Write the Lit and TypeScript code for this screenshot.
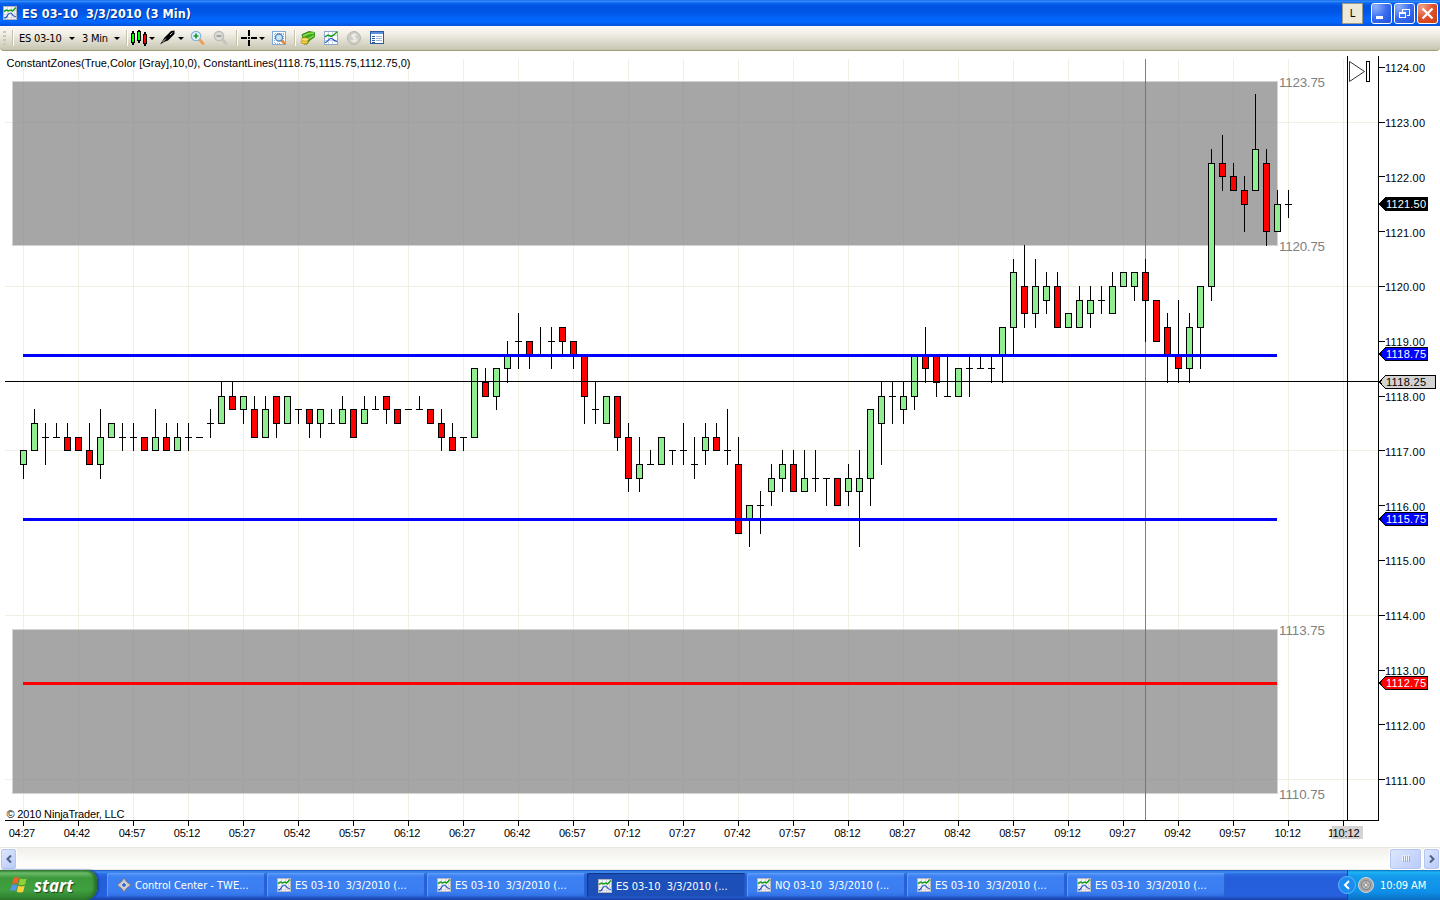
import { LitElement, html, svg, css } from 'lit';
import { customElement, property } from 'lit/decorators.js';

type Candle = [open: number, high: number, low: number, close: number];

interface PriceTag {
  price: number;
  y: number;
  width: number;
  fill: string;
  color: string;
}

/** Bars in quarter points above 1115.00: open, high, low, close. */
const CANDLES: Candle[] = [
  [7, 8, 6, 8], [8, 11, 8, 10], [9, 10, 7, 9], [9, 10, 9, 9], [9, 10, 8, 8], [9, 9, 8, 8],
  [8, 10, 7, 7], [7, 11, 6, 9], [9, 10, 9, 10], [9, 10, 8, 9], [9, 10, 8, 9], [9, 9, 8, 8],
  [8, 11, 8, 9], [9, 10, 8, 8], [8, 10, 8, 9], [9, 10, 8, 9], [9, 9, 9, 9], [10, 11, 9, 10],
  [10, 13, 10, 12], [12, 13, 11, 11], [11, 12, 10, 12], [11, 12, 9, 9], [9, 12, 9, 11], [12, 12, 9, 10],
  [10, 12, 10, 12], [11, 11, 10, 11], [11, 11, 9, 10], [10, 11, 9, 11], [10, 11, 10, 10], [10, 12, 10, 11],
  [11, 11, 9, 9], [10, 12, 10, 11], [11, 12, 11, 11], [12, 12, 10, 11], [11, 11, 10, 10], [11, 11, 11, 11],
  [11, 12, 11, 11], [11, 11, 10, 10], [10, 11, 8, 9], [9, 10, 8, 8], [9, 9, 8, 9], [9, 14, 9, 14],
  [13, 14, 12, 12], [12, 14, 11, 14], [14, 16, 13, 15], [16, 18, 14, 16], [16, 16, 14, 15], [15, 17, 15, 15],
  [16, 17, 14, 16], [17, 17, 15, 16], [16, 16, 14, 15], [15, 15, 10, 12], [11, 13, 10, 11], [10, 12, 10, 12],
  [12, 12, 8, 9], [9, 10, 5, 6], [6, 9, 5, 7], [7, 8, 7, 7], [7, 9, 7, 9], [8, 8, 7, 8],
  [8, 10, 7, 8], [7, 9, 6, 7], [8, 10, 7, 9], [9, 10, 8, 8], [8, 11, 7, 8], [7, 9, 2, 2],
  [3, 4, 1, 4], [4, 5, 2, 4], [5, 7, 4, 6], [6, 8, 5, 7], [7, 8, 5, 5], [5, 8, 5, 6],
  [6, 8, 5, 6], [6, 6, 4, 6], [6, 6, 4, 4], [5, 7, 4, 6], [5, 8, 1, 6], [6, 11, 4, 11],
  [10, 13, 7, 12], [12, 13, 10, 12], [11, 13, 10, 12], [12, 15, 11, 15], [15, 17, 13, 14], [15, 15, 12, 13],
  [12, 15, 12, 12], [12, 14, 12, 14], [14, 15, 12, 14], [14, 15, 14, 14], [14, 15, 13, 14], [15, 17, 13, 17],
  [17, 22, 15, 21], [20, 23, 17, 18], [18, 22, 17, 20], [19, 21, 18, 20], [20, 21, 17, 17], [17, 18, 17, 18],
  [17, 20, 17, 19], [18, 20, 17, 19], [19, 20, 18, 19], [18, 21, 18, 20], [20, 21, 20, 21], [20, 21, 19, 21],
  [21, 22, 16, 19], [19, 19, 16, 16], [17, 18, 13, 15], [15, 19, 13, 14], [14, 18, 13, 17], [17, 20, 14, 20],
  [20, 30, 19, 29], [29, 31, 27, 28], [28, 29, 27, 27], [27, 28, 24, 26], [27, 34, 27, 30], [29, 30, 23, 24],
  [24, 27, 24, 26], [26, 27, 25, 26],
];

const TIMES = [
  '04:27', '04:42', '04:57', '05:12', '05:27', '05:42', '05:57', '06:12', '06:27', '06:42', '06:57', '07:12',
  '07:27', '07:42', '07:57', '08:12', '08:27', '08:42', '08:57', '09:12', '09:27', '09:42', '09:57', '10:12',
];

const PRICES = [1124, 1123, 1122, 1121, 1120, 1119, 1118, 1117, 1116, 1115, 1114, 1113, 1112, 1111];

const TAGS: PriceTag[] = [
  { price: 1121.5, y: 204, width: 49, fill: '#000', color: '#fff' },
  { price: 1118.75, y: 354, width: 49, fill: '#00f', color: '#fff' },
  { price: 1118.25, y: 382, width: 57, fill: '#d3d3d3', color: '#000' },
  { price: 1115.75, y: 519, width: 49, fill: '#00f', color: '#fff' },
  { price: 1112.75, y: 683, width: 49, fill: '#f00', color: '#fff' },
];

const priceY = (price: number) => Math.floor(122.01 + (1123 - price) * 54.8);
const quarterY = (q: number) => priceY(1115 + q / 4);

const chartIcon = () => html`
  <svg width="14" height="14" viewBox="0 0 14 14">
    <rect width="14" height="14" fill="#b4b4be" />
    <rect x="1" y="1" width="12" height="12" fill="#f6f6fa" />
    <path d="M4.500 1v12M8.500 1v12M11.500 1v12M1 4.500h12M1 8.500h12M1 11.500h12" stroke="#d6d6e0" fill="none" />
    <path d="M1 12c2.500 0 3-1 3.500-2.500S6 7 7.500 7s1.500 1 2 2 1.500 1.500 3.500 1.500" stroke="#2458c4" stroke-width="1.200" fill="none" />
    <path d="M1 5.500 3.500 4 5.500 5 8 4l1.500 1L13 1.500" stroke="#18a018" stroke-width="1.500" fill="none" />
  </svg>
`;

/** The price chart with its zones, lines and axes. */
@customElement('price-chart')
export class PriceChart extends LitElement {
  static styles = css`
    :host {
      display: block;
      background: #fff;
    }

    svg {
      display: block;
    }

    text {
      font-family: 'Liberation Sans', Arial, sans-serif;
      font-size: 11px;
      fill: #000;
    }

    .grid {
      stroke: #f0efe1;
    }

    .ink {
      stroke: #000;
    }

    .zone {
      fill: #808080;
      fill-opacity: 0.7;
      stroke: #d3d3d3;
    }

    .zone-label {
      font-size: 13.3px;
      fill: #808080;
    }

    .up {
      fill: #90ee90;
      stroke: #000;
    }

    .down {
      fill: #f00;
      stroke: #000;
    }
  `;

  private _candle([open, high, low, close]: Candle, i: number) {
    const x = 23 + i * 11;
    const top = quarterY(Math.max(open, close));
    const bottom = quarterY(Math.min(open, close));
    return svg`
      <rect x=${x} y=${quarterY(high)} width="1" height=${quarterY(low) - quarterY(high) + 1} />
      ${open === close
        ? svg`<rect x=${x - 3} y=${top} width="7" height="1" />`
        : svg`<rect class=${close > open ? 'up' : 'down'} x=${x - 2.5} y=${top + 0.5} width="6" height=${bottom - top} />`}
    `;
  }

  private _zone(high: number, low: number) {
    const top = priceY(high) + 1;
    const bottom = priceY(low);
    return svg`
      <rect class="zone" x="12.5" y=${top + 0.5} width="1265" height=${bottom - top} />
      <text class="zone-label" x="1279" y=${top + 6} textLength="46">${high.toFixed(2)}</text>
      <text class="zone-label" x="1279" y=${bottom + 6} textLength="46">${low.toFixed(2)}</text>
    `;
  }

  private _tag(tag: PriceTag) {
    const { y, width, fill, color } = tag;
    const right = 1379 + width;
    return svg`
      <path d="M1379.500 ${y}L1385.500 ${y - 6.5}H${right - 0.5}V${y + 6.5}H1385.500Z" fill=${fill} stroke="#000" />
      <text x="1386" y=${y + 4} textLength="40" style="fill:${color}">${tag.price.toFixed(2)}</text>
    `;
  }

  render() {
    return html`
      <svg width="1440" height="796" viewBox="0 51 1440 796" shape-rendering="crispEdges">
        ${[...TIMES, ''].map((_, i) => svg`<path class="grid" d="M${23.5 + i * 55} 59V820" />`)}
        ${[1123, 1120, 1117, 1114, 1111].map((p) => svg`<path class="grid" d="M5 ${priceY(p) + 0.5}H1378" />`)}
        <path d="M1145.500 59V820" stroke="#808080" />
        ${this._zone(1123.75, 1120.75)} ${this._zone(1113.75, 1110.75)}
        <path d="M1145.500 81V246M1145.500 629V795" stroke="#757575" />
        ${CANDLES.map((candle, i) => this._candle(candle, i))}
        <path d="M23 355.500H1277M23 519.500H1277" stroke="#00f" stroke-width="3" />
        <path d="M23 683.500H1277" stroke="#f00" stroke-width="3" />
        <path class="ink" d="M5 381.500H1378M5 820.500H1379M1347.500 56V820M1378.500 56V820" fill="none" />

        <text x="6.500" y="67" textLength="404">ConstantZones(True,Color [Gray],10,0), ConstantLines(1118.75,1115.75,1112.75,0)</text>
        <text x="6.500" y="818" textLength="118">© 2010 NinjaTrader, LLC</text>

        ${TIMES.map(
          (time, i) => svg`
            <path class="ink" d="M${23.5 + i * 55} 820V826" />
            <text x=${8.7 + i * 55.03} y="837" textLength="26.500">${time}</text>
          `,
        )}
        <text x="1328" y="837">1</text>
        <rect x="1332" y="826" width="31" height="13" fill="#d3d3d3" />
        <path class="ink" d="M1343.500 820V826" />
        <text x="1332.500" y="837" textLength="27">10:12</text>

        ${PRICES.map((price) => {
          const y = priceY(price);
          return svg`
            <path class="ink" d="M1379 ${y + 0.5}H1385" />
            <text x="1385" y=${Math.round(127 + (1123 - price) * 54.8)} textLength="40">${price.toFixed(2)}</text>
          `;
        })}
        ${TAGS.map((tag) => this._tag(tag))}

        <g fill="#fff" stroke="#000">
          <path d="M1349.500 61.500 1364.500 71.500 1349.500 81.500Z" shape-rendering="auto" stroke="#333" />
          <rect x="1366.500" y="61.500" width="3" height="20" />
        </g>
      </svg>
    `;
  }
}

/** A window button in the taskbar. */
@customElement('task-button')
export class TaskButton extends LitElement {
  static styles = css`
    :host {
      display: flex;
      align-items: center;
      box-sizing: border-box;
      width: 158px;
      height: 24px;
      padding-left: 10px;
      gap: 4px;
      border-radius: 2px;
      background: linear-gradient(#5795f8 0, #3c81f3 4px, #3a7df2 19px, #2f6be0 24px);
      box-shadow: inset 1px 1px 0 #5f9bf7, inset -1px -1px 0 #2a62d0;
      color: #fff;
      font: 11px 'DejaVu Sans Condensed', Tahoma, sans-serif;
      letter-spacing: 0;
      white-space: pre;
    }

    :host([active]) {
      padding: 2px 0 0 11px;
      background: #1c4fb8;
      box-shadow: inset 1px 1px 1px #123581, inset -1px -1px 0 #2357c0;
    }
  `;

  @property() label = '';
  @property({ type: Boolean, reflect: true }) active = false;
  @property({ type: Boolean }) control = false;

  render() {
    return html`
      ${this.control
        ? html`<svg width="14" height="14" viewBox="0 0 14 14">
            <path d="M7 0l2.500 3.500L14 7l-4.500 3.500L7 14l-2.500-3.500L0 7l4.500-3.500Z" fill="#c9c9c9" stroke="#6a6a70" stroke-width=".8" />
            <path d="M7 4.200 9.800 7 7 9.800 4.200 7Z" fill="#2f66c8" stroke="#f5f5f5" stroke-width=".8" />
          </svg>`
        : chartIcon()}
      <span>${this.label}</span>
    `;
  }
}

@customElement('app-root')
export class AppRoot extends LitElement {
  static styles = css`
    :host {
      display: flex;
      flex-direction: column;
      width: 1440px;
      height: 900px;
      overflow: hidden;
      background: #fff;
      font: 11px 'DejaVu Sans Condensed', Tahoma, sans-serif;
    }

    svg {
      display: block;
      flex: none;
    }

    /* --- Title bar --- */
    .title-bar {
      display: flex;
      align-items: center;
      height: 26px;
      box-sizing: border-box;
      padding: 0 2px 0 3px;
      background: linear-gradient(#0a5be0 0, #3d95ff 1px, #0a66f0 3px, #0054e3 6px, #0055e5 12px, #0364fa 18px, #0366ff 22px, #0150d8 26px);
      color: #fff;
    }

    .title {
      flex: 1;
      margin-left: 5px;
      font: bold 12.5px 'DejaVu Sans Condensed', 'Trebuchet MS', sans-serif;
      letter-spacing: 0.05px;
      text-shadow: 1px 1px 0 #0a2d90;
      white-space: pre;
    }

    .link-button {
      width: 21px;
      height: 21px;
      box-sizing: border-box;
      margin-right: 6px;
      border: 1px solid #9c9a8a;
      background: #ece9d8;
      color: #000;
      line-height: 20px;
      text-align: center;
    }

    .window-button {
      width: 21px;
      height: 21px;
      box-sizing: border-box;
      margin-left: 2px;
      border: 1px solid #fff;
      border-radius: 3px;
      background: radial-gradient(circle at 20% 15%, #8fb0fa, #3a6df0 50%, #1f4fd8);
    }

    .window-button.close {
      background: radial-gradient(circle at 20% 15%, #f0a088, #e0512c 50%, #c83c12);
    }

    /* --- Toolbar --- */
    .toolbar {
      display: grid;
      grid-template-columns: 12px 7px 49px 14px 31px 13px 4px 18px 11px 18px 13px 23px 23px 5px 17px 13px 23px 6px 23px 23px 23px 23px;
      align-items: center;
      height: 25px;
      box-sizing: border-box;
      border-bottom: 1px solid #9da077;
      border-radius: 0 0 4px 4px;
      background: linear-gradient(#fbfaf7, #f0eee4 35%, #c6c4b0);
      letter-spacing: -0.25px;
      white-space: nowrap;
    }

    .grip {
      width: 3px;
      height: 15px;
      margin-left: 3px;
      background: repeating-linear-gradient(#c9c7b8 0 2px, transparent 2px 4px);
    }

    .separator {
      width: 1px;
      height: 16px;
      border-right: 1px solid #fff;
      background: #c5c2b0;
    }

    .caret {
      width: 0;
      margin-left: 1px;
      border: 3px solid transparent;
      border-top-color: #000;
      border-bottom: 0;
    }

    /* --- Scroll bar --- */
    .scroll-bar {
      display: flex;
      height: 23px;
      box-sizing: border-box;
      border-top: 1px solid #e9e8e0;
      border-bottom: 1px solid #eeede5;
      background: linear-gradient(#f1f0ea, #fdfdfb 75%);
      justify-content: space-between;
      align-items: center;
    }

    .scroll-end {
      display: flex;
    }

    .scroll-button,
    .thumb {
      display: grid;
      place-items: center;
      width: 15px;
      height: 20px;
      box-sizing: border-box;
      border: 1px solid #b5c6f0;
      border-radius: 2px;
      background: linear-gradient(135deg, #dce6fe, #b9cbf8);
      box-shadow: 0 0 0 1px #fff;
    }

    .scroll-button {
      margin: 0 1px;
    }

    .thumb {
      width: 31px;
      margin-right: 2px;
    }

    /* --- Taskbar --- */
    .taskbar {
      display: flex;
      align-items: center;
      height: 30px;
      background: linear-gradient(#1f52c8 0, #3f8ff0 2px, #2a6be2 4px, #245edb 8px, #2560de 26px, #1941a5 30px);
    }

    .start {
      display: flex;
      align-items: center;
      align-self: stretch;
      width: 97px;
      box-sizing: border-box;
      margin-right: 10px;
      padding-left: 10px;
      gap: 5px;
      border-radius: 0 10px 12px 0;
      background: linear-gradient(#2f7a2f 0, #6cbb6a 3px, #3c993b 8px, #3fa03f 20px, #2c7a2c 30px);
      box-shadow: inset -3px 0 3px #2a702a, 2px 0 2px #1a45ae;
      color: #fff;
      font: italic bold 17px 'Open Sans', 'Noto Sans', sans-serif;
      letter-spacing: 0;
      text-shadow: 1px 1px 1px #1d4a1d;
    }

    .tasks {
      display: flex;
      flex: 1;
      gap: 2px;
    }

    .tray {
      display: flex;
      align-items: center;
      align-self: stretch;
      width: 93px;
      border-left: 1px solid #0b4a9c;
      box-sizing: border-box;
      background: linear-gradient(#0d6fc0 0, #1cb4f5 2px, #149ceb 6px, #0f8fe8 22px, #0c6fc2 30px);
      color: #fff;
      letter-spacing: -0.1px;
    }

    .tray svg {
      margin-left: -10px;
      margin-right: 5px;
    }
  `;

  private _caret() {
    return html`<span class="caret"></span>`;
  }

  private _magnifier(sign: string, rim: string, lens: string, handle: string) {
    return html`
      <svg width="16" height="16" viewBox="0 0 16 16">
        <path d="M8.500 8.500 13 13.500" stroke=${handle} stroke-width="3" stroke-linecap="round" />
        <circle cx="6" cy="6" r="4.700" fill=${lens} stroke=${rim} stroke-width="1.200" />
        <path d="M3.500 6h5${sign === '+' ? 'M6 3.500v5' : ''}" stroke=${sign === '+' ? '#159a2c' : '#999'} stroke-width="1.700" />
      </svg>
    `;
  }

  private _toolbar() {
    return html`
      <div class="toolbar">
        <span class="grip"></span>
        <span class="separator"></span>
        <span>ES 03-10</span>
        ${this._caret()}
        <span>3 Min</span>
        ${this._caret()}
        <span class="separator"></span>
        <svg width="18" height="16" viewBox="0 0 18 16" shape-rendering="crispEdges">
          <path d="M3 1v14M9 0v13M15 2v14" stroke="#000" stroke-width="2" />
          <rect x="1.500" y="3.500" width="3" height="9" fill="#0f0" stroke="#000" />
          <rect x="7.500" y="1.500" width="3" height="9" fill="#0f0" stroke="#000" />
          <rect x="13.500" y="4.500" width="3" height="9" fill="#f00" stroke="#000" />
        </svg>
        ${this._caret()}
        <svg width="18" height="16" viewBox="0 0 18 16">
          <path d="M1 14.500 5.500 7.500 12 1l3.500-.5V4L9 10.500 5 12Z" fill="#000" />
          <path d="M3.500 12 7 8.500M11 5l2.500-2.500" stroke="#ccc" />
        </svg>
        ${this._caret()}
        ${this._magnifier('+', '#86b5e0', '#e2f1fb', '#f0a050')}
        ${this._magnifier('-', '#bbb', '#dcdcd6', '#c6c5bd')}
        <span class="separator"></span>
        <svg width="17" height="17" viewBox="0 0 17 17" shape-rendering="crispEdges">
          <path d="M0 8h6M10 8h6M8 0v6M8 10v6" stroke="#000" stroke-width="2" />
          <rect x="7" y="7" width="2" height="2" />
        </svg>
        ${this._caret()}
        <svg width="16" height="16" viewBox="0 0 16 16">
          <rect x="1.500" y="1.500" width="13" height="13" fill="#fff" stroke="#82a9dc" />
          <path d="M3.500 4v9M12.500 4v8M4 3.500h9M4 13.500h6" stroke="#8eb1de" stroke-dasharray="1 1" />
          <path d="M10 10 14 14" stroke="#e58b42" stroke-width="2.500" />
          <circle cx="8" cy="7.500" r="3.500" fill="#cae5f8" stroke="#4a83bf" stroke-width="1.300" />
        </svg>
        <span class="separator"></span>
        <svg width="16" height="16" viewBox="0 0 16 16">
          <path d="M2 4.500 9 1.500l5.500 1V7L10 10l-3 4H4Z" fill="#3da51c" stroke="#2a7a14" stroke-width=".8" />
          <path d="M3 6 9 3.500l5-.5M7 9.500 14 5.500" stroke="#8ce04d" stroke-width="1.400" fill="none" />
          <ellipse cx="4.500" cy="12" rx="3.500" ry="1.800" fill="#ffd644" stroke="#c08a16" stroke-width=".8" />
          <ellipse cx="5" cy="9.500" rx="3.500" ry="1.800" fill="#ffe374" stroke="#c08a16" stroke-width=".8" />
        </svg>
        <svg width="16" height="14" viewBox="-1 0 16 14">
          <rect x=".5" y=".5" width="13" height="13" fill="#fff" stroke="#8fa9cc" />
          <path d="M4.500 1v12M8.500 1v12M1 4.500h12M1 9.500h12" stroke="#ccd5e6" />
          <path d="M1 11.500c3 0 3-4 6-4s2 2.500 6 3" stroke="#1c50c8" stroke-width="1.200" fill="none" />
          <path d="M1 6 4 4l3 1.500 2-1L13 1" stroke="#109c10" stroke-width="1.400" fill="none" />
        </svg>
        <svg width="16" height="16" viewBox="0 0 16 16">
          <circle cx="8" cy="8" r="6.500" fill="#cfcec6" stroke="#b6b5ad" />
          <path d="M10.500 5.500C9.500 4 6 4.200 6 6s4.500 1.500 4.500 3.700S6.500 12 5.500 10M8 3.500v9" stroke="#f0efe8" stroke-width="1.300" fill="none" />
        </svg>
        <svg width="16" height="14" viewBox="-1 0 16 14" shape-rendering="crispEdges">
          <rect x=".5" y=".5" width="13" height="12" fill="#fff" stroke="#2f5b9e" />
          <rect x="1" y="1" width="12" height="2" fill="#5c8fdc" />
          <path d="M2 5.500h3M2 7.500h3M2 9.500h3M2 11.500h3" stroke="#2f5b9e" />
          <path d="M6 5.500h6M6 7.500h6M6 9.500h6" stroke="#9fb9dc" />
        </svg>
      </div>
    `;
  }

  render() {
    const tasks = ['Control Center - TWE...', ...Array(6).fill('ES 03-10  3/3/2010 (...')];
    tasks[4] = 'NQ 03-10  3/3/2010 (...';

    return html`
      <div class="title-bar">
        ${chartIcon()}
        <span class="title">ES 03-10  3/3/2010 (3 Min)</span>
        <span class="link-button">L</span>
        <span class="window-button">
          <svg width="19" height="19" viewBox="0 0 19 19"><path d="M4 13.500h7" stroke="#fff" stroke-width="3" /></svg>
        </span>
        <span class="window-button">
          <svg width="19" height="19" viewBox="0 0 19 19" fill="none" stroke="#fff" shape-rendering="crispEdges">
            <path d="M7.500 8V5.500h7v6H12M7 5h8" />
            <rect x="4.500" y="8.500" width="6" height="5" />
            <path d="M4 9.500h7" />
          </svg>
        </span>
        <span class="window-button close">
          <svg width="19" height="19" viewBox="0 0 19 19"><path d="m4.500 4.500 10 10m0-10-10 10" stroke="#fff" stroke-width="2.200" /></svg>
        </span>
      </div>
      ${this._toolbar()}
      <price-chart></price-chart>
      <div class="scroll-bar">
        <span class="scroll-button">
          <svg width="6" height="8" viewBox="0 0 6 8"><path d="M5 .5 1.500 4 5 7.500" fill="none" stroke="#4d6185" stroke-width="2" /></svg>
        </span>
        <span class="scroll-end">
          <span class="thumb">
            <svg width="8" height="7"><path d="M.5 0v6M2.500 0v6M4.500 0v6M6.500 0v6" stroke="#eef4fe" /><path d="M1.500 1v6M3.500 1v6M5.500 1v6M7.500 1v6" stroke="#8cb0f8" /></svg>
          </span>
          <span class="scroll-button">
            <svg width="6" height="8" viewBox="0 0 6 8"><path d="M1 .5 4.500 4 1 7.500" fill="none" stroke="#4d6185" stroke-width="2" /></svg>
          </span>
        </span>
      </div>
      <div class="taskbar">
        <div class="start">
          <svg width="19" height="18" viewBox="0 0 19 18">
            <path d="M3.500 2c2-1.200 4-1 5.500 0L7.500 8c-1.500-1-3.500-1-5.500 0Z" fill="#f0602c" />
            <path d="M10 2.500c2 1 4 1 6.500 0L15 8.500c-2 1-4.500 1-6.500 0Z" fill="#8fd138" />
            <path d="M1.700 9.200c2-1 4-1 5.500 0L5.700 15c-1.500-1-3.500-1-5.700 0Z" fill="#5a92f0" />
            <path d="M8.200 9.700c2 1 4.500 1 6.500 0l-1.500 6c-2 1-4.500 1-6.500 0Z" fill="#fbd23c" />
          </svg>
          <span>start</span>
        </div>
        <div class="tasks">
          ${tasks.map(
            (label, i) => html`<task-button label=${label} ?control=${i === 0} ?active=${i === 3}></task-button>`,
          )}
        </div>
        <div class="tray">
          <svg width="37" height="20" viewBox="0 0 37 20">
            <circle cx="9" cy="10" r="8.500" fill="#1c8df0" stroke="#62b4f6" />
            <path d="M11 6 7 10l4 4" stroke="#fff" stroke-width="2" fill="none" />
            <circle cx="28" cy="10" r="7.500" fill="#a5a5a5" stroke="#d8d8d8" />
            <circle cx="28" cy="10" r="4.500" fill="#b9b9b9" stroke="#808080" />
            <path d="M28 7v6M25 10h6" stroke="#777" />
            <circle cx="28" cy="10" r="1.200" fill="#eee" />
          </svg>
          <span>10:09 AM</span>
        </div>
      </div>
    `;
  }
}

declare global {
  interface HTMLElementTagNameMap {
    'app-root': AppRoot;
    'price-chart': PriceChart;
    'task-button': TaskButton;
  }
}
